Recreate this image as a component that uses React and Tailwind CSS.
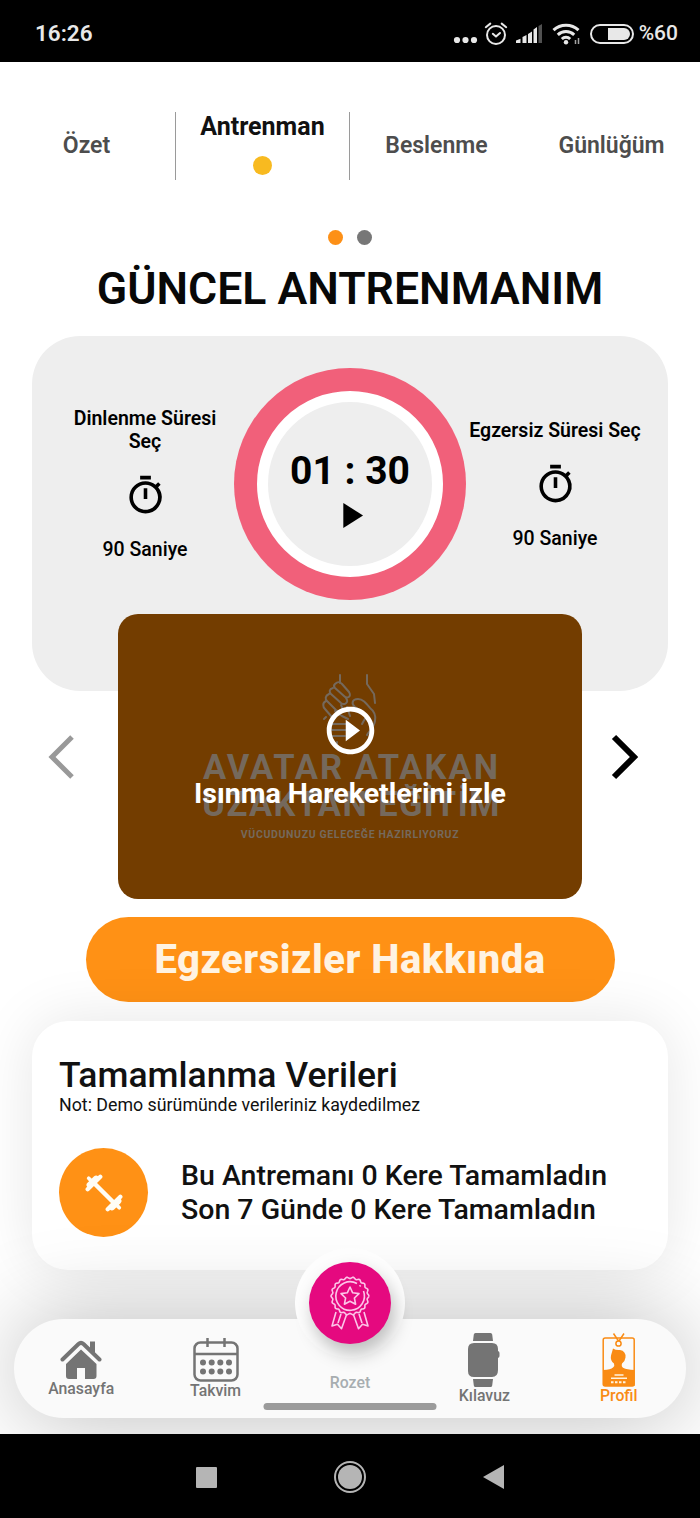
import { MdOutlineTimer, MdPlayArrow, MdPlayCircleOutline } from 'react-icons/md'

const TABS = ['Özet', 'Antrenman', 'Beslenme', 'Günlüğüm']

function StatusBar() {
  return (
    <div className="flex h-[62px] items-center bg-black pt-[5px] pr-[22px] pl-[35px] text-[#e8e8e8]">
      <span className="flex-1 pt-px text-[22.5px] font-semibold">16:26</span>
      <svg width="26" height="8" viewBox="0 0 26 8" fill="currentColor" className="mt-3 mr-[5px]">
        <circle cx="4" cy="4" r="3.1" />
        <circle cx="12.5" cy="4" r="3.1" />
        <circle cx="21" cy="4" r="3.1" />
      </svg>
      <svg width="24" height="24" viewBox="0 0 24 24" fill="none" stroke="currentColor" strokeWidth="2" strokeLinecap="round" strokeLinejoin="round">
        <circle cx="12" cy="13" r="9" />
        <path d="M8.8 11.8 12 14.6l4-3.6M1.8 5.2 6.3 1.6M22.2 5.2l-4.5-3.6" />
      </svg>
      <svg width="27" height="22" viewBox="0 0 27 22" fill="currentColor" className="ml-[8px]">
        <path d="M0 20v-2.500l4.500-1.800V20zM6.500 20v-6l4-2V20zM12 20v-9l4-2.400V20zM17.500 20V6.500L21 4v16z" />
        <path d="M22.500 20V3L26 1v19z" opacity=".35" />
      </svg>
      <svg width="30" height="24" viewBox="0 0 30 24" fill="none" stroke="currentColor" strokeWidth="3" className="ml-[9px]">
        <path d="M1.500 8.200a18 18 0 0 1 25 0M5.800 12.800a12 12 0 0 1 16.400 0M9.800 17a6.200 6.200 0 0 1 8.400 0" />
        <circle cx="14" cy="20.300" r="2.200" fill="currentColor" stroke="none" />
        <path d="M26.500 16v6M23.500 18v4" strokeWidth="1.500" opacity=".7" />
      </svg>
      <div className="ml-[8px] flex h-[20px] w-[44px] items-center justify-end rounded-full border-2 border-current p-[2px]">
        <div className="h-full w-[22px] rounded-r-full bg-current" />
      </div>
      <span className="ml-[5px] text-[21px] font-medium">%60</span>
    </div>
  )
}

function Tabs() {
  return (
    <div className="mt-[50px] grid h-[68px] grid-cols-4 text-[23px] font-semibold text-[#4d4d4d]">
      {TABS.map((tab) =>
        tab === 'Antrenman' ? (
          <div key={tab} className="flex flex-col items-center border-x-[1.5px] border-[#9a9a9a] pt-px">
            <span className="text-[25px] leading-7 font-bold text-[#111]">{tab}</span>
            <span className="mt-[15px] size-[19px] rounded-full bg-[#f8ba20]" />
          </div>
        ) : (
          <div key={tab} className="flex items-center justify-center pr-0.5">{tab}</div>
        )
      )}
    </div>
  )
}

function DurationPicker({ title }) {
  return (
    <div className="flex flex-1 flex-col items-center text-center text-[19.5px] leading-[23px] text-black">
      <p className="font-semibold">{title}</p>
      <MdOutlineTimer className="mt-[21px] mb-[21px] size-[43px]" />
      <p className="font-medium">90 Saniye</p>
    </div>
  )
}

function TimerCard() {
  return (
    <div className="mx-8 h-[355px] rounded-[48px] bg-[#eee] px-6 pt-8">
      <div className="flex items-center">
        <DurationPicker title="Dinlenme Süresi Seç" />
        <div className="flex size-[232px] items-center justify-center rounded-full bg-[#f1607a]">
          <div className="flex size-[186px] flex-col items-center rounded-full border-[11px] border-white bg-[#eee] pt-[45px]">
            <span className="text-[39px] leading-[48px] font-bold whitespace-nowrap">01 : 30</span>
            <MdPlayArrow className="-mt-px size-[43px]" />
          </div>
        </div>
        <DurationPicker title="Egzersiz Süresi Seç" />
      </div>
    </div>
  )
}

function HandsLogo() {
  return (
    <svg width="60" height="74" viewBox="0 0 60 74" fill="none" stroke="#75695c" strokeWidth="2" strokeLinecap="round" strokeLinejoin="round">
      <path d="M20 1v8M47 1v9l7 10 1 9" />
      <path d="M15 10c3-3 5-2 7 0l7 8c3 5-2 7-5 4l-9-8c-2-2-1-3 0-4Z" />
      <path d="M13 14c-4 1-4 4-2 6l10 9c4 3 8-1 5-5M9 20c-4 2-4 5-2 7l9 9c4 3 8-1 5-5M6 27c-4 2-3 6-1 8l6 7c4 2 7-2 4-5" />
      <path d="M6 43l-2 2M27 33l3 9M12 46c2-5 6-7 10-4l6 3" />
      <path d="M42 50l5-9-12-8c-4-3-3-8 3-8 5 0 8 4 12 9 4 3 6 8 5 13-1 6-5 9-8 14" />
      <path d="M12 50h14M12 56h14M13 62h12M17 68v2" />
    </svg>
  )
}

function VideoCard() {
  return (
    <div className="relative z-10 ml-[43px] flex h-[285px] w-[464px] flex-col items-center rounded-[20px] bg-[#733d00] pt-[60px] text-[#75695c]">
      <HandsLogo />
      <p className="pt-px pl-[3px] text-[34.5px] leading-[37px] font-bold tracking-[2px] whitespace-nowrap">AVATAR ATAKAN</p>
      <p className="pl-[3px] text-[34.5px] leading-[37px] font-bold tracking-[1.4px] whitespace-nowrap">UZAKTAN EĞİTİM</p>
      <p className="mt-1 text-[10.5px] leading-4 font-bold tracking-[0.65px]">VÜCUDUNUZU GELECEĞE HAZIRLIYORUZ</p>
      <div className="absolute inset-0 flex flex-col items-center pt-[88px] text-white">
        <MdPlayCircleOutline className="size-[57px]" />
        <span className="mt-[18px] text-[28.5px] leading-[34px] font-bold">Isınma Hareketlerini İzle</span>
      </div>
    </div>
  )
}

function Chevron({ className, d }) {
  return (
    <svg width="28" height="46" viewBox="0 0 28 46" fill="none" stroke="currentColor" className={className}>
      <path d={d} />
    </svg>
  )
}

function DumbbellIcon() {
  return (
    <svg width="38" height="38" viewBox="0 0 36 36" fill="none" stroke="#fffdf5" strokeLinecap="round">
      <path d="m8 8 20 20" strokeWidth="4.200" />
      <path d="M2.500 14.500 14.500 2.500M21.500 33.500 33.500 21.500" strokeWidth="4" />
      <path d="M4.500 10.500l6-6M25.500 31.500l6-6" strokeWidth="6" />
      <path d="m3.500 4 3 3M32.500 32 29.500 29" strokeWidth="3.500" />
    </svg>
  )
}

function StatsCard() {
  return (
    <div className="mx-8 mt-[19px] h-[249px] rounded-[36px] bg-white px-[27px] pt-[33px] text-[#111] shadow-[0_0_60px_rgba(0,0,0,0.1)]">
      <h2 className="text-[35.5px] leading-[42px] font-medium">Tamamlanma Verileri</h2>
      <p className="text-[17.8px] leading-[18px]">Not: Demo sürümünde verileriniz kaydedilmez</p>
      <div className="mt-[34px] flex items-center gap-[33px]">
        <div className="flex size-[89px] items-center justify-center rounded-full bg-[#ff9115]">
          <DumbbellIcon />
        </div>
        <p className="text-[28.5px] leading-[34px] font-medium whitespace-nowrap">
          Bu Antremanı 0 Kere Tamamladın<br />Son 7 Günde 0 Kere Tamamladın
        </p>
      </div>
    </div>
  )
}

function HomeIcon() {
  return (
    <svg width="42" height="40" viewBox="0 0 42 40" fill="#747474">
      <path d="M30 1.500h5v14l-5-5z" />
      <path d="M2.500 19.500 18.500 4q2.500-2.300 5 0l16 15.500" fill="none" stroke="#747474" strokeWidth="4" strokeLinecap="round" />
      <path d="M21 9.500 36.500 24v12q0 3-3 3H25V28h-8v11H9q-3 0-3-3V24z" />
    </svg>
  )
}

function CalendarIcon() {
  return (
    <svg width="46" height="44" viewBox="0 0 46 44" fill="none" stroke="#747474" strokeWidth="2.500">
      <rect x="1.500" y="4.500" width="43" height="38" rx="6" />
      <path d="M1.500 16h43M14.500 0v9M31.500 0v9" />
      {[10, 18.7, 27.3, 36].map((x) => (
        <g key={x} fill="#747474" stroke="none">
          <circle cx={x} cy="24.500" r="3" />
          <circle cx={x} cy="33.500" r="3" />
        </g>
      ))}
    </svg>
  )
}

function WatchIcon() {
  return (
    <svg width="32" height="54" viewBox="0 0 32 54" fill="#747474">
      <path d="M7.500 0h15q1.500 0 1.700 1.500L25 8H5l.8-6.500Q6 0 7.500 0ZM5 46h20l-.8 6.500Q24 54 22.500 54h-15Q6 54 5.800 52.500Z" />
      <path d="M6 10h18q6 0 6 6v2q1.500.5 1.500 2v3q0 1.500-1.500 2v12q0 7-6 7H6q-6 0-6-6V16q0-6 6-6Z" />
    </svg>
  )
}

function ProfileIcon() {
  return (
    <svg width="34" height="54" viewBox="0 0 34 54" fill="none" stroke="#f98b14" strokeWidth="1.500">
      <rect x="1.200" y="5" width="31" height="48" rx="2" />
      <path d="m11.500.5 5 7.500M22 .5l-5 7.500" />
      <circle cx="16.500" cy="10.500" r="2.600" />
      <path
        d="M11 15.500q3 2 7 1.500 6 1 5.500 7.500-.5 4-3.500 6-1 3 1.500 4.500 3 1.500 11 2V53H1V37q8-.5 10-2.500 2-1.500 1-4-4-3-3-8z"
        fill="#f98b14"
        stroke="none"
      />
      <path d="M12.500 42h9M9 45.300h16" stroke="#fff3e0" />
      <path d="M9 49.300h16" stroke="#fff3e0" strokeWidth="2" strokeDasharray="2.500 1.500" />
    </svg>
  )
}

// wavy outline of the rosette, 18 lobes
const rosette = Array.from({ length: 145 }, (_, i) => {
  const a = (i / 144) * Math.PI * 2
  const r = 18.2 + Math.cos(a * 18) * 0.8
  return `${i ? 'L' : 'M'}${(21 + Math.cos(a) * r).toFixed(2)} ${(20 + Math.sin(a) * r).toFixed(2)}`
}).join('')

function MedalIcon() {
  return (
    <svg width="42" height="54" viewBox="0 0 42 54" fill="none" stroke="#fcc5e8" strokeWidth="1.600" strokeLinejoin="round">
      <path d={rosette} />
      <path d="M28 7.500A14.300 14.300 0 1 0 34.500 15M30.500 9.300l1.200 1.200" />
      <path d="m21 11 2.700 5.800 6.300.8-4.600 4.400 1.200 6.200-5.600-3-5.600 3 1.200-6.200-4.600-4.400 6.300-.8z" />
      <path d="M7 36 3 50l5.500-1.800 4 4.500 5-14M12 38 9 47M35 36l4 14-5.500-1.800-4 4.500-5-14M30 38l3 9" />
    </svg>
  )
}

function NavItem({ icon, label, className }) {
  return (
    <div className={`flex flex-col items-center text-[15.8px] leading-[17px] font-medium ${className}`}>
      {icon}
      <span>{label}</span>
    </div>
  )
}

function BottomNav() {
  return (
    <div className="relative mx-[14px] mt-[49px] grid h-[99px] grid-cols-5 rounded-full bg-[#fafafa] text-[#747474] shadow-[0_0_90px_rgba(0,0,0,0.27)]">
      <NavItem icon={<HomeIcon />} label="Anasayfa" className="pt-[21px]" />
      <NavItem icon={<CalendarIcon />} label="Takvim" className="pt-[19px]" />
      <NavItem label="Rozet" className="pt-[55px] text-[#a7adb0]" />
      <NavItem icon={<WatchIcon />} label="Kılavuz" className="pt-[14px]" />
      <NavItem icon={<ProfileIcon />} label="Profil" className="pt-[14px] text-[#f98b14]" />
      <div className="absolute top-[-71px] left-1/2 flex size-[110px] -translate-x-1/2 items-center justify-center rounded-full bg-[#fdfdfd]">
        <div className="flex size-[82px] items-center justify-center rounded-full bg-[#e5097f] shadow-[4px_10px_18px_rgba(0,0,0,0.25)]">
          <MedalIcon />
        </div>
      </div>
      <div className="absolute bottom-[8px] left-1/2 h-[7px] w-[173px] -translate-x-1/2 rounded-full bg-[#9b9b9b]" />
    </div>
  )
}

function SystemNav() {
  return (
    <div className="flex h-[84px] items-center justify-between bg-black px-[196px] pt-[2px]">
      <div className="size-[21px] rounded-[1px] bg-[#b5b5b5]" />
      <div className="flex size-[32px] items-center justify-center rounded-full border-2 border-[#b5b5b5]">
        <div className="size-[24px] rounded-full bg-[#b5b5b5]" />
      </div>
      <svg width="21" height="24" viewBox="0 0 21 24" fill="#b5b5b5">
        <path d="M21 0v24L0 12z" />
      </svg>
    </div>
  )
}

export default function App() {
  return (
    <div className="flex h-[1518px] w-[700px] flex-col overflow-hidden bg-black font-[Roboto,sans-serif]">
      <StatusBar />
      <main className="h-[1372px] overflow-hidden bg-white">
        <Tabs />
        <div className="mt-[50px] flex justify-center gap-[14px]">
          <span className="size-[15px] rounded-full bg-[#fd9017]" />
          <span className="size-[15px] rounded-full bg-[#777]" />
        </div>
        <h1 className="mt-[18px] mb-5 text-center text-[44.6px] leading-[53px] font-semibold text-[#080808]">GÜNCEL ANTRENMANIM</h1>
        <TimerCard />
        <div className="-mt-[77px] flex items-center pl-[47px]">
          <Chevron d="M25 3 5 23l20 20" className="stroke-5 text-[#999]" />
          <VideoCard />
          <Chevron d="m3 3 20 20L3 43" className="ml-[29px] stroke-6 text-black" />
        </div>
        <button className="mx-auto mt-[18px] flex h-[85px] w-[529px] items-center justify-center rounded-full bg-[#ff9115] text-[40px] font-extrabold tracking-[0.5px] text-[#fff3e2]">
          Egzersizler Hakkında
        </button>
        <StatsCard />
        <BottomNav />
      </main>
      <SystemNav />
    </div>
  )
}
